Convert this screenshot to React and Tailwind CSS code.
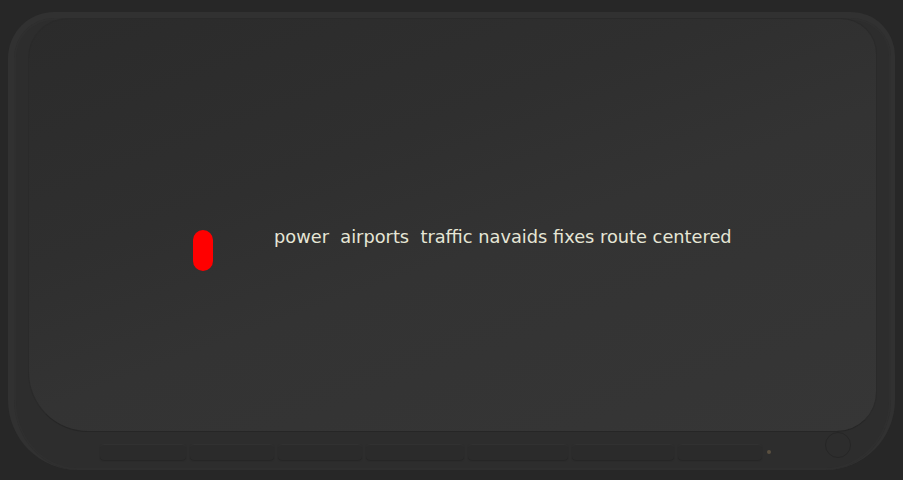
export default function App() {
  const buttons = [
    "w-[86px]", "w-[84px]", "w-[84px]", "w-[98px]", "w-[100px]", "w-[102px]", "w-[84px]",
  ];
  return (
    <div className="w-[903px] h-[480px] bg-[#272727] overflow-hidden pt-[12px] pl-[8px]">
      <div
        className="w-[887px] h-[458px] bg-[#2d2d2d] rounded-tl-[46px] rounded-tr-[44px] rounded-bl-[70px] rounded-br-[70px] border-t-[6px] border-l-[6px] border-r-[4px] border-[#313131] shadow-[inset_0_0_0_2px_#2f2f2f] flex flex-col"
      >
        <div className="ml-[14px] mr-[14px] h-[414px] rounded-tl-[40px] rounded-tr-[36px] rounded-bl-[60px] rounded-br-[40px] bg-[linear-gradient(160deg,#2b2b2b_0%,#2f2f2f_35%,#333333_55%,#363636_100%)] border border-[#2a2a2a] border-b-[#262626] flex items-start pt-[211px] pl-[164px]"
        >
          <div className="w-[20px] h-[41px] rounded-[10px] bg-[#ff0000]" />
          <div
            className="ml-[61px] -mt-[4px] text-[17.8px] leading-[21px] text-[#e6e6d6] whitespace-pre"
            style={{ fontFamily: '"DejaVu Sans", sans-serif' }}
          >
            {"power  airports  traffic navaids fixes route centered"}
          </div>
        </div>
        <div className="flex items-start pl-[86px] pt-[12px] relative">
          <div className="flex gap-[4px]">
            {buttons.map((w, i) => (
              <div
                key={i}
                className={`${w} h-[16px] rounded-[4px] bg-[#2b2b2b] border-t border-[#313131] shadow-[0_1px_1px_#262626]`}
              />
            ))}
          </div>
          <div className="w-[4px] h-[4px] rounded-full bg-[#5a5040] absolute left-[753px] top-[18px]" />
          <div className="w-[26px] h-[26px] rounded-full border border-[#262626] absolute left-[811px] top-[0px]" />
        </div>
      </div>
    </div>
  );
}
